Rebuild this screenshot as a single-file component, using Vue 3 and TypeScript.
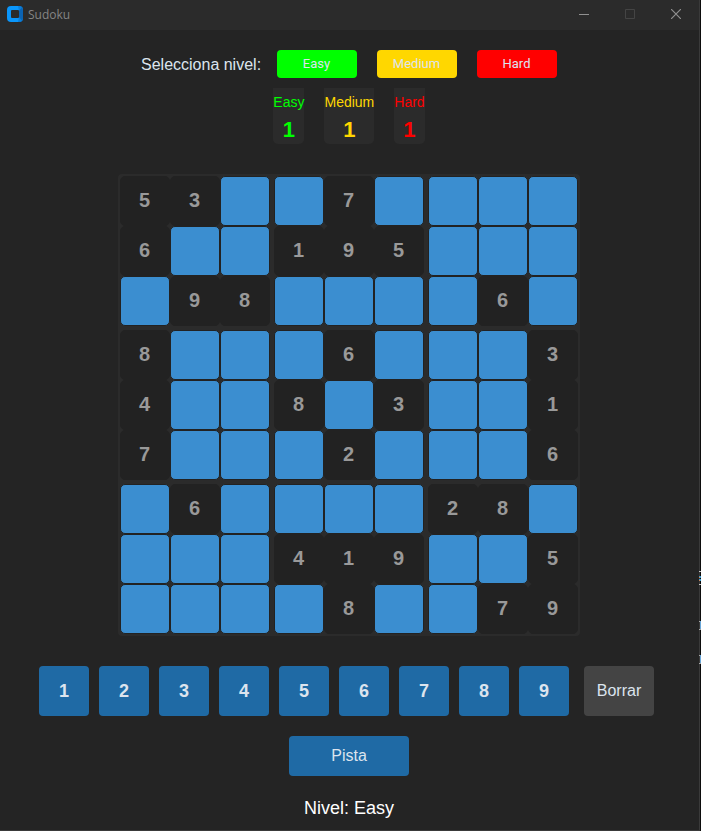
<script setup lang="ts">
import { computed, ref } from 'vue'

interface Level {
  id: string
  wins: number
}

const levels: Level[] = [
  { id: 'Easy', wins: 1 },
  { id: 'Medium', wins: 1 },
  { id: 'Hard', wins: 1 },
]
const level = ref('Easy')

const puzzle = [
  '53..7....',
  '6..195...',
  '.98....6.',
  '8...6...3',
  '4..8.3..1',
  '7...2...6',
  '.6....28.',
  '...419..5',
  '....8..79',
]

const entries = ref<Record<string, string>>({})
const selected = ref('')

const boxes = computed(() =>
  Array.from({ length: 9 }, (_, b) =>
    Array.from({ length: 9 }, (_, c) => {
      const row = Math.floor(b / 3) * 3 + Math.floor(c / 3)
      const col = (b % 3) * 3 + (c % 3)
      const given = puzzle[row][col]
      return { key: `${row}-${col}`, row, col, given: given === '.' ? '' : given }
    }),
  ),
)

function enter(value: string) {
  if (selected.value) entries.value[selected.value] = value
}
</script>

<template>
  <div class="window">
    <header class="titlebar">
      <svg class="logo" viewBox="0 0 16 16" aria-hidden="true">
        <rect width="16" height="16" rx="4" fill="#0a96fb" />
        <path d="M12 0a4 4 0 0 1 4 4v8a4 4 0 0 1-4 4z" fill="#0b63b3" />
        <path d="M11 0h1a4 4 0 0 1 3 1.5L12 5zM11 16h1a4 4 0 0 0 3-1.5L12 11z" fill="#0a7fdb" />
        <rect x="4" y="4" width="8" height="8" rx="1" fill="#2b2b2b" />
      </svg>
      <h1 class="title">Sudoku</h1>
      <div class="controls">
        <button type="button" aria-label="Minimizar">
          <svg viewBox="0 0 10 10"><path d="M0 5.5h10" stroke="#909090" /></svg>
        </button>
        <button type="button" aria-label="Maximizar" disabled>
          <svg viewBox="0 0 10 10"><path d="M.5.5h9v9h-9z" stroke="#444" fill="none" /></svg>
        </button>
        <button type="button" aria-label="Cerrar">
          <svg viewBox="0 0 10 10"><path d="M0 0l10 10M10 0L0 10" stroke="#909090" stroke-width="1.2" /></svg>
        </button>
      </div>
    </header>

    <main class="content">
      <div class="selector" role="group" aria-labelledby="level-label">
        <span id="level-label" class="selector-label">Selecciona nivel:</span>
        <button
          v-for="l in levels"
          :key="l.id"
          type="button"
          class="level"
          :class="l.id.toLowerCase()"
          @click="level = l.id"
        >{{ l.id }}</button>
      </div>

      <div class="scores">
        <div v-for="l in levels" :key="l.id" class="score" :class="l.id.toLowerCase()">
          <span class="score-name">{{ l.id }}</span>
          <strong class="score-value">{{ l.wins }}</strong>
        </div>
      </div>

      <div class="board">
        <div v-for="(box, i) in boxes" :key="i" class="box">
          <button
            v-for="cell in box"
            :key="cell.key"
            type="button"
            class="cell"
            :class="{ given: cell.given }"
            :disabled="!!cell.given"
            :aria-label="`Fila ${cell.row + 1}, columna ${cell.col + 1}`"
            @click="selected = cell.key"
          >{{ cell.given || entries[cell.key] }}</button>
        </div>
      </div>

      <div class="keypad">
        <button v-for="n in 9" :key="n" type="button" class="key" @click="enter(String(n))">{{ n }}</button>
        <button type="button" class="erase" @click="enter('')">Borrar</button>
      </div>

      <button type="button" class="hint">Pista</button>
      <p class="status">Nivel: {{ level }}</p>
    </main>

    <svg class="edge" viewBox="0 0 2 100" aria-hidden="true">
      <path d="M0 1.5h2M0 14.5h2" stroke="#c8c8c8" />
      <path d="M0 6h2v2H0zM0 9h2v2H0z" fill="#3f9ccb" />
      <path d="M0 7h1v1H0zM0 10h1v1H0z" fill="#c98a62" />
      <path d="M1 51h1v9H1zM1 85h1v9H1z" fill="#6aa7d8" />
      <path d="M0 51h1v1H0zM0 59h2v1H0zM0 85h1v1H0zM0 93h2v1H0z" fill="#a9a9a9" />
    </svg>
  </div>
</template>

<style>
body {
  margin: 0;
  background: #0c0c0c;
}
</style>

<style scoped>
.window {
  position: relative;
  display: flex;
  flex-direction: column;
  box-sizing: border-box;
  min-height: 100vh;
  margin-right: 1px;
  border-right: 1px solid #3a3a3a;
  border-bottom: 1px solid #3a3a3a;
  background: #242424;
  color: #dce4ee;
  font-family: "Liberation Sans", Arial, sans-serif;
}

button {
  padding: 0;
  border: 0;
  color: inherit;
  font: inherit;
}

.titlebar {
  display: flex;
  align-items: center;
  height: 30px;
  padding-left: 7px;
  background: #2b2b2b;
}

.logo {
  width: 16px;
  height: 16px;
  margin-bottom: 2px;
}

.title {
  flex: 1;
  margin: 0 0 0 5px;
  color: #858585;
  font: 400 12px/16px "Open Sans", "Noto Sans", sans-serif;
}

.controls {
  display: flex;
  height: 100%;
}

.controls button {
  display: flex;
  align-items: center;
  justify-content: center;
  width: 46px;
  padding-bottom: 2px;
  background: none;
}

.controls svg {
  width: 10px;
  height: 10px;
}

.content {
  display: flex;
  flex-direction: column;
  align-items: center;
  padding: 20px 1px 8px 0;
}

.selector {
  display: flex;
  align-items: center;
  gap: 20px;
}

.selector-label {
  width: 116px;
  font-size: 16px;
  line-height: 30px;
  height: 28px;
  white-space: nowrap;
}

.level {
  width: 80px;
  height: 28px;
  padding: 0 1px 1px 0;
  border-radius: 4px;
  font-family: Roboto, sans-serif;
  font-size: 13px;
}

.level.easy {
  background: #00ff00;
}

.level.medium {
  background: #ffd700;
}

.level.hard {
  background: #ff0000;
}

.scores {
  display: flex;
  gap: 20px;
  margin-top: 10px;
}

.score {
  display: flex;
  flex-direction: column;
  align-items: center;
  border-radius: 0 0 5px 5px;
  background: #2b2b2b;
  line-height: 28px;
}

.score.easy {
  color: #00ff00;
}

.score.medium {
  color: #ffd700;
}

.score.hard {
  color: #ff0000;
}

.score-name {
  font-size: 14px;
}

.score-value {
  font-size: 22px;
}

.board {
  display: grid;
  grid-template-columns: repeat(3, auto);
  gap: 4px;
  margin-top: 30px;
  padding: 2px;
  border-radius: 4px;
  background: #2b2b2b;
}

.box {
  display: grid;
  grid-template-columns: repeat(3, 50px);
  grid-auto-rows: 50px;
}

.cell {
  padding: 0 1px 2px 0;
  border: 1px solid #222222;
  border-radius: 5px;
  background: #3b8ed0;
  font-size: 20px;
  font-weight: 700;
}

.cell.given {
  background: #222222;
  color: #999999;
}

.keypad {
  display: flex;
  gap: 10px;
  margin-top: 30px;
  padding-right: 5px;
}

.key,
.erase {
  height: 50px;
  border-radius: 4px;
}

.key {
  width: 50px;
  background: #1f6aa5;
  font-size: 18px;
  font-weight: 700;
}

.erase {
  width: 70px;
  margin-left: 5px;
  background: #444444;
  font-size: 16px;
}

.hint {
  width: 120px;
  height: 40px;
  margin-top: 20px;
  border-radius: 4px;
  background: #1f6aa5;
  font-size: 16px;
}

.status {
  margin: 20px 0 0;
  color: #ffffff;
  font-size: 18px;
  line-height: 24px;
}

/* Sliver of the neighbouring window that shows past the frame */
.edge {
  position: absolute;
  top: 570px;
  right: -2px;
  width: 2px;
  height: 100px;
}
</style>
